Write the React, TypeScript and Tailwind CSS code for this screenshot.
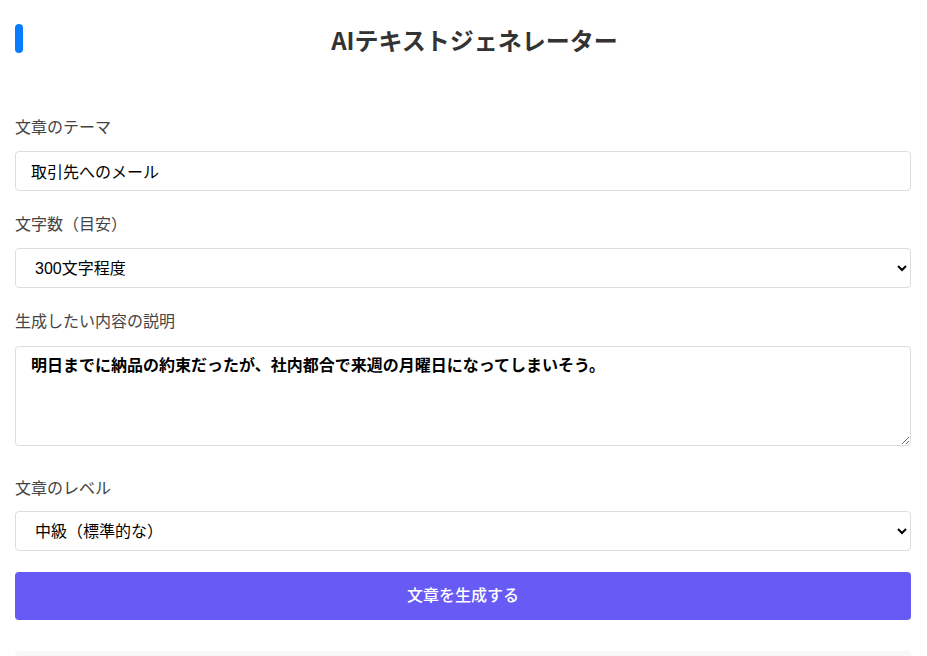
import { useState } from "react";

const font = "font-['Liberation_Sans','Noto_Sans_CJK_JP',sans-serif]";

const App = () => {
    const [theme, setTheme] = useState("取引先へのメール")
    const [length, setLength] = useState("300")
    const [detail, setDetail] = useState("明日までに納品の約束だったが、社内都合で来週の月曜日になってしまいそう。")
    const [level, setLevel] = useState("middle")

    return (
        <div className={`w-full min-h-screen bg-white text-[#333] ${font}`}>
            <div className="pl-[15px] pr-[16px] pt-[24px]">
                {/* header */}
                <div className="flex items-center h-[29px]">
                    <div className="w-2 h-[29px] rounded-full bg-[#0a7cff]" />
                    <h1 className="flex-1 text-center pl-[15px] text-[24px] font-bold leading-none mt-[2px] font-['Noto_Sans_CJK_JP',sans-serif]">
                        AIテキストジェネレーター
                    </h1>
                </div>

                <div className="mt-[63px] flex flex-col">
                    <label className="block h-6 leading-6 text-base text-[#444] mb-[11px]">文章のテーマ</label>
                    <input
                        value={theme}
                        onChange={(e) => setTheme(e.target.value)}
                        className="block w-full h-10 px-[15px] border border-[#ddd] rounded bg-white text-base text-black outline-none"
                    />

                    <label className="block h-6 leading-6 text-base text-[#444] mt-[22px] mb-[11px]">文字数（目安）</label>
                    <select
                        value={length}
                        onChange={(e) => setLength(e.target.value)}
                        className="block w-full h-10 px-[15px] border border-[#ddd] rounded bg-white text-base text-black outline-none"
                    >
                        <option value="100">100文字程度</option>
                        <option value="300">300文字程度</option>
                        <option value="500">500文字程度</option>
                    </select>

                    <label className="block h-6 leading-6 text-base text-[#444] mt-[22px] mb-[12px]">生成したい内容の説明</label>
                    <textarea
                        value={detail}
                        onChange={(e) => setDetail(e.target.value)}
                        className="block w-full h-[100px] px-[15px] py-[7px] leading-6 border border-[#ddd] rounded bg-white text-base font-bold text-black outline-none"
                    />

                    <label className="block h-6 leading-6 text-base text-[#444] mt-[31px] mb-[10px]">文章のレベル</label>
                    <select
                        value={level}
                        onChange={(e) => setLevel(e.target.value)}
                        className="block w-full h-10 px-[15px] border border-[#ddd] rounded bg-white text-base text-black outline-none"
                    >
                        <option value="easy">初級（やさしい）</option>
                        <option value="middle">中級（標準的な）</option>
                        <option value="hard">上級（専門的な）</option>
                    </select>

                    <button className="mt-[21px] w-full h-12 rounded bg-[#675af5] text-white text-base font-medium">
                        文章を生成する
                    </button>

                    <div className="mt-[31px] w-full h-[120px] rounded bg-[#f8f8f8]" />
                </div>
            </div>
        </div>
    )
}

export default App
